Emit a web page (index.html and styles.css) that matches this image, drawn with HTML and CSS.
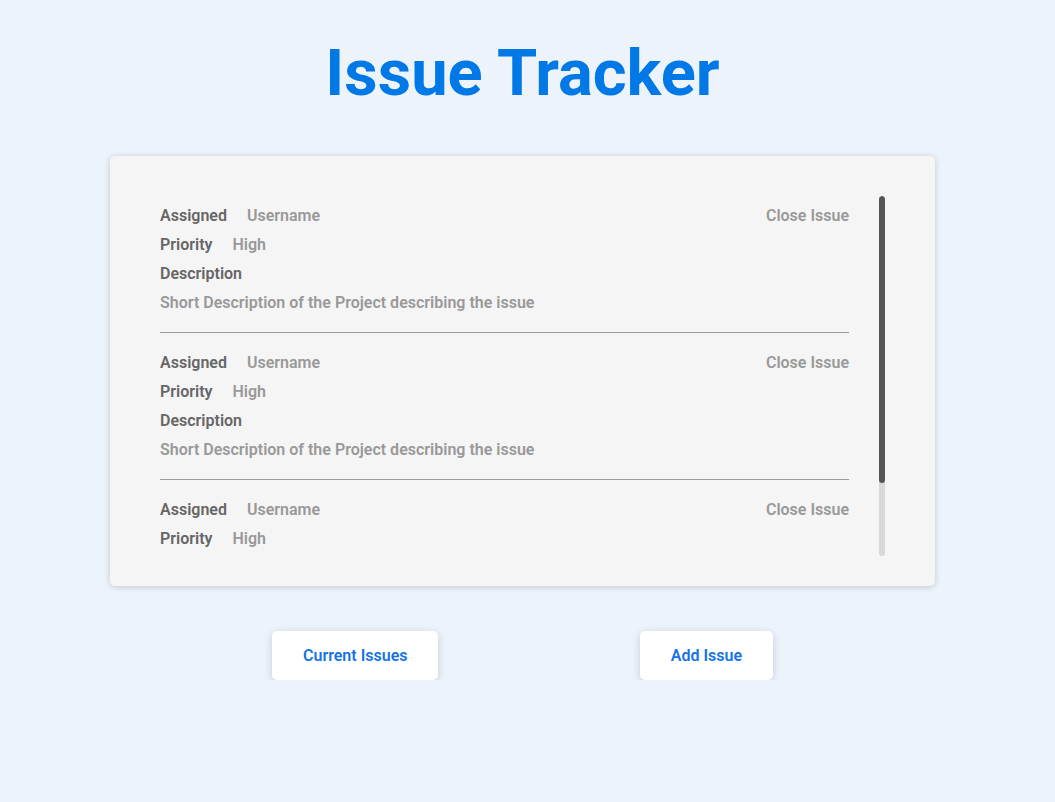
FILE: index.html
```html
<!DOCTYPE html>
<html lang="en">
<head>
<meta charset="utf-8">
<title>Issue Tracker</title>
<link rel="stylesheet" href="styles.css">
</head>
<body>
<main class="page">
  <h1 class="title">Issue Tracker</h1>
  <section class="card">
    <div class="list">
      <article class="issue">
        <div class="row">
          <span class="label">Assigned</span><span class="value">Username</span>
          <span class="close">Close Issue</span>
        </div>
        <div class="row"><span class="label">Priority</span><span class="value">High</span></div>
        <div class="row"><span class="label">Description</span></div>
        <div class="row"><span class="value desc">Short Description of the Project describing the issue</span></div>
      </article>
      <article class="issue">
        <div class="row">
          <span class="label">Assigned</span><span class="value">Username</span>
          <span class="close">Close Issue</span>
        </div>
        <div class="row"><span class="label">Priority</span><span class="value">High</span></div>
        <div class="row"><span class="label">Description</span></div>
        <div class="row"><span class="value desc">Short Description of the Project describing the issue</span></div>
      </article>
      <article class="issue last">
        <div class="row">
          <span class="label">Assigned</span><span class="value">Username</span>
          <span class="close">Close Issue</span>
        </div>
        <div class="row"><span class="label">Priority</span><span class="value">High</span></div>
        <div class="row"><span class="label">Description</span></div>
        <div class="row"><span class="value desc">Short Description of the Project describing the issue</span></div>
      </article>
    </div>
    <div class="scrollbar" aria-hidden="true">
      <div class="thumb"></div>
    </div>
  </section>
  <nav class="actions">
    <button class="btn">Current Issues</button>
    <button class="btn">Add Issue</button>
  </nav>
</main>
</body>
</html>
```
FILE: styles.css
```css
* { box-sizing: border-box; }
html, body {
  margin: 0;
  padding: 0;
  background: #edf3fb;
  font-family: Roboto, "Liberation Sans", sans-serif;
}
.page {
  width: 1045px;
  display: flex;
  flex-direction: column;
  align-items: center;
}
.title {
  margin: 33px 0 0;
  font-size: 65px;
  line-height: 80px;
  font-weight: 700;
  color: #0078e6;
}
.card {
  margin-top: 43px;
  width: 825px;
  height: 430px;
  background: #f5f5f5;
  border-radius: 5px;
  box-shadow: 0 1px 6px rgba(0, 0, 0, 0.18);
  padding: 40px 50px 30px 50px;
  display: flex;
}
.list {
  flex: 1;
  height: 360px;
  overflow-y: auto;
  scrollbar-width: none;
  padding-top: 5px;
  padding-bottom: 5px;
}
.list::-webkit-scrollbar { display: none; }
.scrollbar {
  width: 6px;
  height: 360px;
  background: #d8d8d8;
  border-radius: 3px;
  overflow: hidden;
}
.thumb {
  height: 287px;
  background: #555;
  border-radius: 3px;
}
.issue {
  margin-right: 30px;
  padding-bottom: 15px;
  margin-bottom: 15px;
  border-bottom: 1px solid #999;
}
.issue.last { border-bottom: none; margin-bottom: 0; }
.row {
  display: flex;
  align-items: center;
  height: 29px;
  font-size: 16px;
  font-weight: 600;
}
.label { color: #666; margin-right: 20px; }
.value { color: #999; }
.close { margin-left: auto; color: #999; }
.actions {
  margin-top: 45px;
  width: 501px;
  display: flex;
  justify-content: space-between;
}
.btn {
  font-family: Roboto, "Liberation Sans", sans-serif;
  font-size: 16px;
  font-weight: 600;
  color: #1673e6;
  background: #fff;
  border: none;
  border-radius: 5px;
  padding: 15px 31px;
  line-height: 19px;
  box-shadow: 0 2px 8px rgba(0, 0, 0, 0.16);
}
```
